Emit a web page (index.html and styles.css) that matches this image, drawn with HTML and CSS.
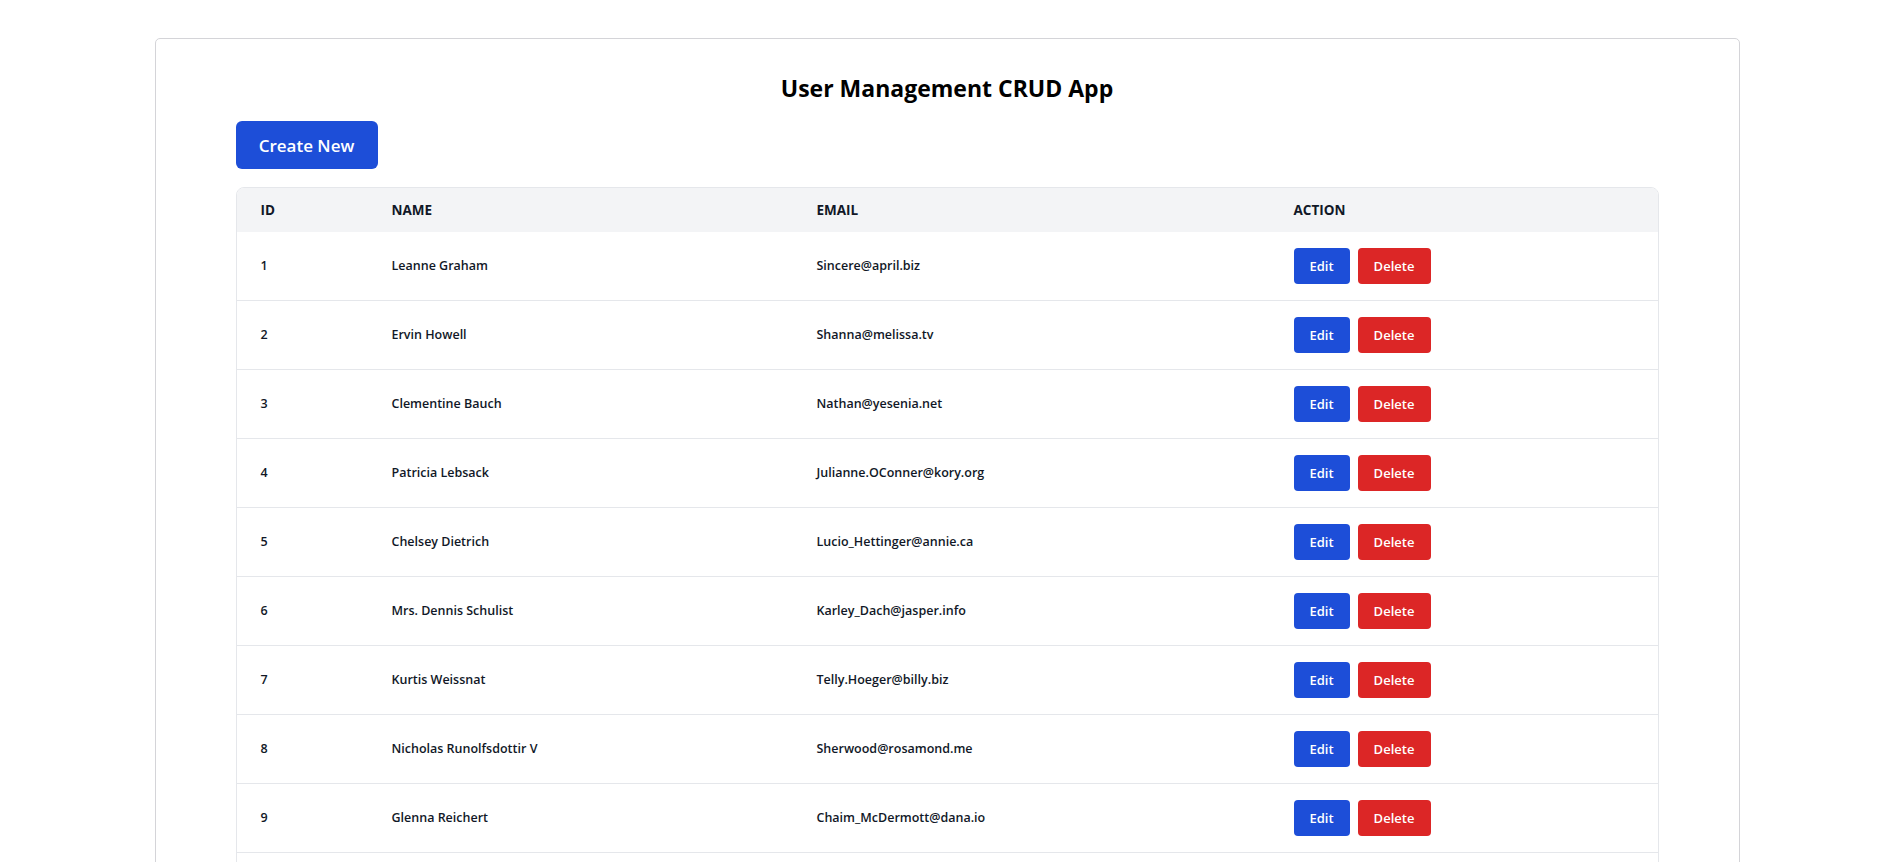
FILE: index.html
```html
<!DOCTYPE html>
<html lang="en">
<head>
<meta charset="utf-8">
<title>User Management CRUD App</title>
<link rel="stylesheet" href="styles.css">
</head>
<body>
<div class="page">
  <div class="card">
    <h1 class="title">User Management CRUD App</h1>
    <div class="toolbar">
      <button class="btn-create">Create New</button>
    </div>
    <div class="table-wrap">
      <table class="users">
        <thead>
          <tr>
            <th class="col-id">ID</th>
            <th class="col-name">Name</th>
            <th class="col-email">Email</th>
            <th class="col-action">Action</th>
          </tr>
        </thead>
        <tbody>
          <tr><td>1</td><td>Leanne Graham</td><td>Sincere@april.biz</td><td><div class="actions"><button class="btn btn-edit">Edit</button><button class="btn btn-delete">Delete</button></div></td></tr>
          <tr><td>2</td><td>Ervin Howell</td><td>Shanna@melissa.tv</td><td><div class="actions"><button class="btn btn-edit">Edit</button><button class="btn btn-delete">Delete</button></div></td></tr>
          <tr><td>3</td><td>Clementine Bauch</td><td>Nathan@yesenia.net</td><td><div class="actions"><button class="btn btn-edit">Edit</button><button class="btn btn-delete">Delete</button></div></td></tr>
          <tr><td>4</td><td>Patricia Lebsack</td><td>Julianne.OConner@kory.org</td><td><div class="actions"><button class="btn btn-edit">Edit</button><button class="btn btn-delete">Delete</button></div></td></tr>
          <tr><td>5</td><td>Chelsey Dietrich</td><td>Lucio_Hettinger@annie.ca</td><td><div class="actions"><button class="btn btn-edit">Edit</button><button class="btn btn-delete">Delete</button></div></td></tr>
          <tr><td>6</td><td>Mrs. Dennis Schulist</td><td>Karley_Dach@jasper.info</td><td><div class="actions"><button class="btn btn-edit">Edit</button><button class="btn btn-delete">Delete</button></div></td></tr>
          <tr><td>7</td><td>Kurtis Weissnat</td><td>Telly.Hoeger@billy.biz</td><td><div class="actions"><button class="btn btn-edit">Edit</button><button class="btn btn-delete">Delete</button></div></td></tr>
          <tr><td>8</td><td>Nicholas Runolfsdottir V</td><td>Sherwood@rosamond.me</td><td><div class="actions"><button class="btn btn-edit">Edit</button><button class="btn btn-delete">Delete</button></div></td></tr>
          <tr><td>9</td><td>Glenna Reichert</td><td>Chaim_McDermott@dana.io</td><td><div class="actions"><button class="btn btn-edit">Edit</button><button class="btn btn-delete">Delete</button></div></td></tr>
          <tr><td>10</td><td>Clementina DuBuque</td><td>Rey.Padberg@karina.biz</td><td><div class="actions"><button class="btn btn-edit">Edit</button><button class="btn btn-delete">Delete</button></div></td></tr>
        </tbody>
      </table>
    </div>
  </div>
</div>
</body>
</html>
```
FILE: styles.css
```css
* { box-sizing: border-box; }
html, body { margin: 0; padding: 0; background: #ffffff; }
body {
  font-family: "Open Sans", "Noto Sans", "Liberation Sans", sans-serif;
  color: #111827;
}
.page {
  padding-top: 38px;
  display: flex;
  justify-content: center;
}
.card {
  width: 1585px;
  margin-left: -3px;
  border: 1px solid #d4d4d8;
  border-radius: 5px;
  padding: 33px 80px 40px 80px;
  background: #fff;
}
.title {
  margin: 0 0 17px 0;
  text-align: center;
  font-size: 23px;
  line-height: 32px;
  font-weight: 700;
  color: #000;
}
.toolbar { margin-bottom: 18px; display: flex; }
.btn-create {
  height: 48px;
  width: 142px;
  border: none;
  border-radius: 6px;
  background: #1d4ed8;
  color: #fff;
  font-family: inherit;
  font-size: 17px;
  font-weight: 600;
  cursor: pointer;
}
.table-wrap {
  border: 1px solid #e5e7eb;
  border-radius: 8px;
  overflow: hidden;
}
.users {
  width: 100%;
  border-collapse: collapse;
  table-layout: fixed;
}
.users th {
  background: #f3f4f6;
  text-align: left;
  text-transform: uppercase;
  font-size: 13.5px;
  font-weight: 700;
  color: #111827;
  height: 44px;
  padding: 0 24px;
}
.col-id { width: 131px; }
.col-name { width: 425px; }
.col-email { width: 477px; }
.users td {
  height: 69px;
  padding: 0 24px;
  font-size: 12.5px;
  font-weight: 600;
  color: #111827;
  border-top: 1px solid #e5e7eb;
}
.users tbody tr:first-child td { border-top: none; height: 68px; }
.actions { display: flex; gap: 8px; }
.btn {
  height: 36px;
  border: none;
  border-radius: 4px;
  color: #fff;
  font-family: inherit;
  font-size: 13px;
  font-weight: 600;
  cursor: pointer;
}
.btn-edit { background: #1d4ed8; width: 56px; padding: 0; }
.btn-delete { background: #dc2626; width: 73px; padding: 0; }
```
